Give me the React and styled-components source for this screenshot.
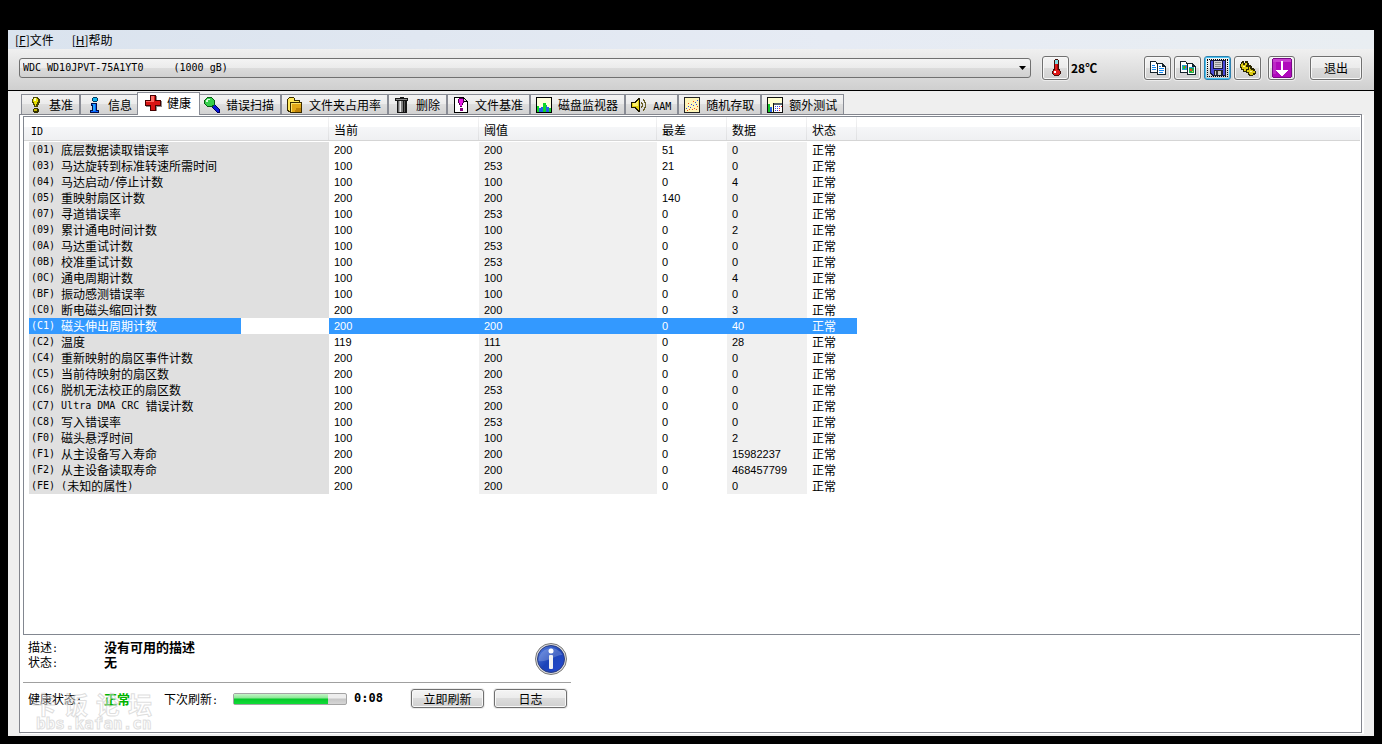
import { Fragment, useState } from "react";
import styled, { createGlobalStyle, css } from "styled-components";

const GlobalStyle = createGlobalStyle`
  * {
    box-sizing: border-box;
  }
  body {
    margin: 0;
    background: #000;
    color: #000;
    font: 12px/16px "Noto Sans CJK SC", sans-serif;
  }
  button, select {
    font: inherit;
    color: inherit;
  }
`;

const smart = [
  ["(01) 底层数据读取错误率", 200, 200, 51, 0],
  ["(03) 马达旋转到标准转速所需时间", 100, 253, 21, 0],
  ["(04) 马达启动/停止计数", 100, 100, 0, 4],
  ["(05) 重映射扇区计数", 200, 200, 140, 0],
  ["(07) 寻道错误率", 100, 253, 0, 0],
  ["(09) 累计通电时间计数", 100, 100, 0, 2],
  ["(0A) 马达重试计数", 100, 253, 0, 0],
  ["(0B) 校准重试计数", 100, 253, 0, 0],
  ["(0C) 通电周期计数", 100, 100, 0, 4],
  ["(BF) 振动感测错误率", 100, 100, 0, 0],
  ["(C0) 断电磁头缩回计数", 200, 200, 0, 3],
  ["(C1) 磁头伸出周期计数", 200, 200, 0, 40],
  ["(C2) 温度", 119, 111, 0, 28],
  ["(C4) 重新映射的扇区事件计数", 200, 200, 0, 0],
  ["(C5) 当前待映射的扇区数", 200, 200, 0, 0],
  ["(C6) 脱机无法校正的扇区数", 100, 253, 0, 0],
  ["(C7) Ultra DMA CRC 错误计数", 200, 200, 0, 0],
  ["(C8) 写入错误率", 100, 253, 0, 0],
  ["(F0) 磁头悬浮时间", 100, 100, 0, 2],
  ["(F1) 从主设备写入寿命", 200, 200, 0, 15982237],
  ["(F2) 从主设备读取寿命", 200, 200, 0, 468457799],
  ["(FE) (未知的属性)", 200, 200, 0, 0],
];

const columns = [
  { label: "ID", width: 300 },
  { label: "当前", width: 150 },
  { label: "阈值", width: 178 },
  { label: "最差", width: 70 },
  { label: "数据", width: 80 },
  { label: "状态", width: 50 },
];

// latin runs go in the narrow 6px font, chinese stays at 12px
const mixed = (text) =>
  text
    .split(/([\x20-\x7e]+)/)
    .map((part, i) =>
      i % 2 ? <Mono key={i}>{part}</Mono> : <Fragment key={i}>{part}</Fragment>
    );

const Icon = ({ size = 16, children }) => (
  <svg
    width={size}
    height={size}
    viewBox={`0 0 ${size} ${size}`}
    shapeRendering="crispEdges"
    aria-hidden="true"
  >
    {children}
  </svg>
);

const BulbIcon = () => (
  <Icon>
    <path d="M6 0h5v1h1v1h1v4h-1v2h-1v2H7V8H6V6H5V2h1z" fill="#4a4600" />
    <path d="M7 1h3v1h1v3h-1v2H9v2H8V7H7V5H6V2h1z" fill="#e8e000" />
    <path d="M7 1h2v3H7z" fill="#ffffb4" />
    <path d="M7 11h4v1h1v3h-1v1H7v-1H6v-3h1z" fill="#333000" />
    <path d="M7 12h3v2H7z" fill="#c4b800" />
  </Icon>
);

const InfoIcon = () => (
  <Icon>
    <path d="M7 0h4v1h1v3h-1v1H7V4H6V1h1z" fill="#003a60" />
    <path d="M7 1h4v3H7z" fill="#12b4f0" />
    <path d="M5 6h6v7h2v3H4v-3h2V9H5z" fill="#00104a" />
    <path d="M6 7h4v7h2v1H5v-1h2V8H6z" fill="#0862ff" />
    <path d="M7 7h2v7H7z" fill="#22a4ff" />
  </Icon>
);

const CrossIcon = () => (
  <Icon>
    <path d="M6 1h6v5h5v6h-5v4H6v-4H1V6h5z" fill="#8a8a8a" />
    <path d="M5 0h6v5h5v6h-5v5H5v-5H0V5h5z" fill="#480000" />
    <path d="M6 1h4v5h5v4h-5v5H6v-5H1V6h5z" fill="#d81414" />
    <path d="M6 1h3v5H6zM1 6h8v1H1z" fill="#ff6a62" />
  </Icon>
);

const MagnifierIcon = () => (
  <Icon>
    <path d="m8 9 2-2 6 6v3h-3l-5-5z" fill="#000058" />
    <path d="m9 9 1-1 5 5v2h-2L9 10z" fill="#0818d8" />
    <path d="M3 0h5v1h1v1h1v1h1v5h-1v1H9v1H3V9H2V8H1V7H0V3h1V2h1V1h1z" fill="#065c12" />
    <path d="M3 1h5v1h1v1h1v5H8v1H3V8H2V7H1V3h1V2h1z" fill="#35cf4b" />
    <path d="M3 2h3v1H4v2H2V3h1z" fill="#d4ffd9" />
  </Icon>
);

const FolderIcon = () => (
  <Icon>
    <path d="M1 1h1V0h5v1h1v2h5v2h2v11H3v-1H1v-1H0V2h1z" fill="#3a2c00" />
    <path d="M2 1h5v3h5v1H3v9H2v-1H1V2h1z" fill="#ffe85c" />
    <path d="M4 6h10v9H4z" fill="#e2a818" />
    <path d="M4 6h10v1H5v8H4z" fill="#ffe46a" />
    <path d="M9 11h5v4H8v-2h1z" fill="#c08408" />
  </Icon>
);

const TrashIcon = () => (
  <Icon>
    <path d="M6 0h4v1h4v3h-1v12H3V4H1V1h5z" fill="#161616" />
    <path d="M2 2h11v1H2z" fill="#8c8c8c" />
    <path d="M4 4h1v11H4z" fill="#6c6c6c" />
    <path d="M5 4h1v11H5z" fill="#b4b4b4" />
    <path d="M6 4h1v11H6z" fill="#e8e8e8" />
    <path d="M7 4h2v11H7z" fill="#808080" />
    <path d="M10 4h1v11h-1z" fill="#5c5c5c" />
  </Icon>
);

const DocIcon = () => (
  <Icon>
    <path d="M1 0h10v1h1v1h1v1h1v1h1v12H1z" fill="#000" />
    <path d="M2 1h8v4h4v10H2z" fill="#fff" />
    <path d="M11 2h1v1h1v1h-2z" fill="#ddd" />
    <path d="M6 1h4v1h1v4h-1v2H9v2H7V8H6V6H5V2h1z" fill="#4c004c" />
    <path d="M6 2h4v4H9v3H7V6H6z" fill="#e61ae6" />
    <path d="M7 11h3v3H7z" fill="#84007c" />
  </Icon>
);

const ChartIcon = () => (
  <Icon>
    <path d="M0 0h16v16H0z" fill="#000" />
    <path d="M1 1h14v14H1z" fill="#ffffdc" />
    <path d="M1 9h2v2h2v4H1zM7 6h3v2h1v7H7zM13 11h2v4h-2z" fill="#10d828" />
    <path d="M3 11h2v-1h2v5H3zM10 9h1v1h2v5h-3z" fill="#2660e8" />
  </Icon>
);

const SpeakerIcon = () => (
  <Icon>
    <path d="M7 1h2v14H7v-1H6v-1H5v-1H4v-1H0V5h4V4h1V3h1V2h1z" fill="#1c1800" />
    <path d="M1 6h4V5h1V4h1V3h1v10H7v-1H6v-1H5v-1H1z" fill="#e2cf10" />
    <path d="M2 6h3V5h1V4h1v5H2z" fill="#fff36a" />
    <path d="M10 5h1v1h1v4h-1v1h-1V9h1V7h-1zM12 2h1v1h1v2h1v6h-1v2h-1v1h-1v-2h1v-2h1V6h-1V4h-1z" fill="#665c24" />
  </Icon>
);

const ScatterIcon = () => (
  <Icon>
    <path d="M0 0h16v16H0z" fill="#222" />
    <path d="M1 1h14v14H1z" fill="#fff6b8" />
    <path d="M2 11h1v1H2zM4 9h1v1H4zM6 10h1v1H6zM7 7h1v1H7zM9 8h1v1H9zM11 5h1v1h-1zM13 3h1v1h-1zM12 7h1v1h-1z" fill="#3448e8" />
    <path d="M3 13h1v1H3zM5 12h1v1H5zM8 12h1v1H8zM10 11h1v1h-1zM12 12h1v1h-1zM4 6h1v1H4zM9 4h1v1H9zM13 9h1v1h-1z" fill="#f04a20" />
  </Icon>
);

const ExtraIcon = () => (
  <Icon>
    <path d="M0 0h16v16H0z" fill="#111" />
    <path d="M1 1h14v5H1z" fill="#ffffd0" />
    <path d="M1 6h5v9H1z" fill="#ffffd0" />
    <path d="M1 7h2v8H1z" fill="#14c828" />
    <path d="M3 10h2v5H3z" fill="#2660e8" />
    <path d="M7 6h8v9H7z" fill="#fff" />
    <path d="M7 6h8v2H7z" fill="#55616b" />
    <path d="M8 9h1v1H8zM10 9h1v1h-1zM12 9h1v1h-1zM8 11h1v1H8zM10 11h1v1h-1zM8 13h1v1H8zM10 13h1v1h-1z" fill="#3448e8" />
    <path d="M12 11h1v1h-1zM12 13h1v1h-1zM14 9h1v1h-1z" fill="#e83030" />
  </Icon>
);

const ThermometerIcon = () => (
  <Icon size={18}>
    <path d="M7 1h1V0h3v1h1v9h1v2h1v3h-1v1h-1v1H7v-1H6v-1H5v-3h1v-2h1z" fill="#42110c" />
    <path d="M8 1h3v5H8z" fill="#7fdce4" />
    <path d="M8 5h3v6h1v1h1v3h-1v1H7v-1H6v-3h1v-1h1z" fill="#e01818" />
    <path d="M7 12h2v2H7z" fill="#fff" />
    <path d="M10 5h1v6h-1z" fill="#a00c0c" />
  </Icon>
);

const CopyIcon = () => (
  <Icon>
    <path d="M0 1h6v1h1v1h1v10H0z" fill="#16242c" />
    <path d="M1 2h5v2h1v8H1z" fill="#fff" />
    <path d="M7 3h6v1h1v1h1v1h1v9H7z" fill="#16242c" />
    <path d="M8 4h4v3h3v7H8z" fill="#fff" />
    <path d="M2 5h3v1H2zM2 7h4v1H2zM2 9h4v1H2zM9 6h2v1H9zM9 8h5v1H9zM9 10h5v1H9zM9 12h4v1H9z" fill="#1688f0" />
  </Icon>
);

const CopyImageIcon = () => (
  <Icon>
    <path d="M0 1h6v1h1v1h1v10H0z" fill="#16242c" />
    <path d="M1 2h5v2h1v8H1z" fill="#fff" />
    <path d="M2 5h5v5H2z" fill="#2a9bd4" />
    <path d="M3 6h2v3H3z" fill="#24c434" />
    <path d="M7 3h6v1h1v1h1v1h1v9H7z" fill="#16242c" />
    <path d="M8 4h4v3h3v7H8z" fill="#fff" />
    <path d="M9 7h5v6H9z" fill="#1aa84c" />
    <path d="M9 7h5v1H9z" fill="#2a9bd4" />
    <path d="M10 9h2v2h-2zM5 6h1v2H5z" fill="#f04018" />
    <path d="M12 11h1v1h-1z" fill="#ffe020" />
  </Icon>
);

const SaveIcon = () => (
  <Icon>
    <path d="M0 0h16v16H2v-1H1v-1H0z" fill="#181838" />
    <path d="M1 1h2v8h10V1h2v14H3v-1H2v-1H1z" fill="#4848d8" />
    <path d="M4 1h8v7H4z" fill="#d4d4d4" />
    <path d="M5 2h6v1H5zM5 4h6v1H5zM5 6h6v1H5z" fill="#8a8a8a" />
    <path d="M4 10h9v5H4z" fill="#222" />
    <path d="M5 11h6v4H5z" fill="#c8c8c8" />
    <path d="M6 11h2v4H6z" fill="#333" />
  </Icon>
);

const OptionsIcon = () => (
  <Icon>
    <path d="M2 1h2v2h1V1h3v2h1v2h2v1h1v2h2v1h1v2h1v3h-1v1h-2v1H9v-1H8v-2H6v-1H3V10H1V8H0V4h1V2h1z" fill="#2c2800" />
    <path d="M2 3h1v2h2V3h2v2H6v2h2v2H6v2H4V9H2V7H1V4h1z" fill="#dcca10" />
    <path d="M9 7h1v2h1v1h2v1h2v2h-2v2h-3v-1H9v-2H7v-2h2z" fill="#dcca10" />
    <path d="M3 6h2v1H3zM10 11h2v1h-2z" fill="#fff8a0" />
  </Icon>
);

const DownIcon = () => (
  <Icon size={20}>
    <path d="M1 0h18v1h1v18h-1v1H1v-1H0V1h1z" fill="#7a0788" />
    <path d="M1 1h18v18H1z" fill="#b00abc" />
    <path d="M1 1h18v3H1z" fill="#c840d0" />
    <path d="M1 4h3v12H1z" fill="#bc28c6" />
    <path d="M9 3h2v9h5v1h-1v1h-1v1h-1v1h-1v1h-1v1H9v-1H8v-1H7v-1H6v-1H5v-1H4v-1h5z" fill="#fff" />
  </Icon>
);

const BigInfoIcon = () => (
  <svg width="32" height="32" viewBox="0 0 32 32" aria-hidden="true">
    <defs>
      <linearGradient id="ball" x1="0" y1="0" x2="1" y2="1">
        <stop offset="0" stopColor="#5a84e4" />
        <stop offset="0.5" stopColor="#1c44b8" />
        <stop offset="1" stopColor="#2448d0" />
      </linearGradient>
    </defs>
    <circle cx="16" cy="16" r="15.5" fill="#dcdcdc" stroke="#777" />
    <circle cx="16" cy="16" r="13.5" fill="url(#ball)" stroke="#2a3c80" />
    <path d="M3.5 18a12.7 12.7 0 0 1 24-6C22 11 12 20 3.500 18z" fill="#fff" opacity="0.2" />
    <circle cx="16" cy="8" r="2.500" fill="#fff" />
    <rect x="14" y="12" width="4" height="14" rx="1" fill="#f2f2f2" />
  </svg>
);

const tabs = [
  ["基准", BulbIcon],
  ["信息", InfoIcon],
  ["健康", CrossIcon],
  ["错误扫描", MagnifierIcon],
  ["文件夹占用率", FolderIcon],
  ["删除", TrashIcon],
  ["文件基准", DocIcon],
  ["磁盘监视器", ChartIcon],
  ["AAM", SpeakerIcon],
  ["随机存取", ScatterIcon],
  ["额外测试", ExtraIcon],
];

const App = () => {
  const [tab, setTab] = useState("健康");
  const [selected, setSelected] = useState(11);
  const progress = 84;

  return (
    <Screen>
      <GlobalStyle />
      <Window>
        <MenuBar>
          <MenuItem>
            [<u>F</u>]文件
          </MenuItem>
          <MenuItem>
            [<u>H</u>]帮助
          </MenuItem>
        </MenuBar>
        <Toolbar>
          <DriveBox>
            <DriveSelect aria-label="驱动器">
              <option>
                {"WDC WD10JPVT-75A1YT0     (1000 gB)".replace(/ /g, "\u00a0")}
              </option>
            </DriveSelect>
            <Arrow width="9" height="5" viewBox="0 0 9 5" aria-hidden="true">
              <path d="M1 0h7L4.500 4z" />
            </Arrow>
          </DriveBox>
          <ToolButton aria-label="温度">
            <ThermometerIcon />
          </ToolButton>
          <Temperature>28℃</Temperature>
          <ToolGroup>
            <ToolButton aria-label="复制文本">
              <CopyIcon />
            </ToolButton>
            <ToolButton aria-label="复制图像">
              <CopyImageIcon />
            </ToolButton>
            <ToolButton aria-label="保存" $focused>
              <SaveIcon />
            </ToolButton>
            <ToolButton aria-label="选项">
              <OptionsIcon />
            </ToolButton>
          </ToolGroup>
          <DownloadButton aria-label="最小化">
            <DownIcon />
          </DownloadButton>
          <ExitButton>退出</ExitButton>
        </Toolbar>

        <TabStrip role="tablist">
          {tabs.map(([label, TabIcon]) => (
            <Tab
              key={label}
              role="tab"
              aria-selected={tab === label}
              $active={tab === label}
              onClick={() => setTab(label)}
            >
              <TabIcon />
              <span>{mixed(label)}</span>
            </Tab>
          ))}
        </TabStrip>

        <Panel>
          <List>
            <Table>
              <colgroup>
                {columns.map(({ label, width }) => (
                  <Col key={label} $width={width} />
                ))}
              </colgroup>
              <thead>
                <tr>
                  {columns.map(({ label }) => (
                    <HeadCell key={label}>{mixed(label)}</HeadCell>
                  ))}
                </tr>
              </thead>
              <tbody>
                {smart.map(([name, ...values], i) => (
                  <Row
                    key={name}
                    $selected={i === selected}
                    onClick={() => setSelected(i)}
                  >
                    <Cell>{mixed(name)}</Cell>
                    {values.map((value, n) => (
                      <NumberCell key={n}>{value}</NumberCell>
                    ))}
                    <Cell>正常</Cell>
                  </Row>
                ))}
              </tbody>
            </Table>
          </List>

          <Details>
            <Description>
              <dt>描述{mixed(":")}</dt>
              <dd>没有可用的描述</dd>
              <dt>状态{mixed(":")}</dt>
              <dd>无</dd>
            </Description>
            <BigInfoIcon />
          </Details>

          <StatusRow>
            <span>健康状态{mixed(":")}</span>
            <Health>正常</Health>
            <span>下次刷新{mixed(":")}</span>
            <Progress
              role="progressbar"
              aria-label="下次刷新"
              aria-valuenow={progress}
            >
              <ProgressBar style={{ width: `${progress}%` }} />
            </Progress>
            <Countdown>0:08</Countdown>
            <SmallButton>立即刷新</SmallButton>
            <SmallButton>日志</SmallButton>
          </StatusRow>

          <Watermark>
            <WatermarkName>
              <span>卡</span>
              <span>饭</span>
              <span>论</span>
              <span>坛</span>
            </WatermarkName>
            <WatermarkUrl>bbs.kafan.cn</WatermarkUrl>
          </Watermark>
        </Panel>
      </Window>
    </Screen>
  );
};

const face = css`
  background: linear-gradient(#f4f4f4, #ebebeb 50%, #dcdcdc 50%, #d0d0d0);
`;

const Mono = styled.span`
  font-family: "DejaVu Sans Mono", monospace;
  font-size: 10px;
  line-height: 1;
  white-space: pre;
`;

const Screen = styled.div`
  display: flex;
  min-height: 100vh;
  padding: 30px 8px 8px;
`;

const Window = styled.main`
  flex: 1;
  min-width: 0;
  display: flex;
  flex-direction: column;
  background: #efefef;
`;

const MenuBar = styled.nav`
  display: flex;
  gap: 18px;
  height: 19px;
  padding-left: 7px;
  background: linear-gradient(90deg, #dae3ee, #e6ebf4 60%, #e9eef2);
`;

const MenuItem = styled.button`
  padding: 0;
  border: 0;
  background: none;
  line-height: 19px;
`;

const Toolbar = styled.header`
  display: flex;
  align-items: center;
  padding: 7px 12px 10px 11px;
  border-bottom: 1px solid #000;
  background: linear-gradient(#f0f0f0, #cfcfcf);
`;

const DriveBox = styled.div`
  flex: 1;
  display: grid;
  align-items: center;
  margin-right: 11px;
`;

const DriveSelect = styled.select`
  grid-area: 1 / 1;
  appearance: none;
  height: 20px;
  padding: 0 3px;
  border: 1px solid #707070;
  border-radius: 3px;
  font-family: "DejaVu Sans Mono", monospace;
  font-size: 10px;
  ${face}
`;

const Arrow = styled.svg`
  grid-area: 1 / 1;
  justify-self: end;
  margin-right: 4px;
  pointer-events: none;
`;

const ToolButton = styled.button`
  display: flex;
  align-items: center;
  justify-content: center;
  width: 27px;
  height: 24px;
  padding: 0;
  border: 1px solid #707070;
  border-radius: 3px;
  box-shadow: 0 0 0 1px #ececec, inset 0 0 0 1px #f8f8f8;
  ${face}
  ${({ $focused }) =>
    $focused &&
    css`
      border-color: #2c7fae;
      box-shadow: inset 0 0 0 1px #48c4f4;
      outline: 1px dotted #000;
      outline-offset: -4px;
    `}
`;

const DownloadButton = styled(ToolButton)`
  margin: 0 15px 0 7px;
`;

const ExitButton = styled(ToolButton)`
  width: 52px;
`;

const Temperature = styled.strong`
  width: 75px;
  padding-left: 2px;
`;

const ToolGroup = styled.div`
  display: flex;
  gap: 3px;
`;

const TabStrip = styled.div`
  display: flex;
  align-items: flex-end;
  height: 23px;
  padding-left: 13px;
`;

const Tab = styled.button`
  display: flex;
  align-items: center;
  gap: 6px;
  height: 20px;
  padding: 0 6px 0 5px;
  border: 1px solid #898c95;
  border-bottom: 0;
  line-height: 19px;
  white-space: nowrap;
  background: linear-gradient(#f3f3f3, #ebebeb 50%, #dedede 50%, #d2d2d2);
  svg {
    overflow: visible;
  }
  ${({ $active }) =>
    $active &&
    css`
      z-index: 1;
      height: 23px;
      margin: 0 -2px -1px;
      padding: 0 8px 3px 7px;
      background: #fff;
    `}
`;

const Panel = styled.section`
  position: relative;
  flex: 1;
  display: flex;
  flex-direction: column;
  margin: 0 12px 3px 11px;
  padding: 1px 1px 0 3px;
  border: 1px solid #83858d;
  box-shadow: 2px 1px #fff;
  background: #fff;
`;

const List = styled.div`
  flex: 1;
  padding-left: 5px;
  border: 1px solid #828790;
  border-right: 0;
  background: linear-gradient(#fff 10px, #f5f6f8 10px, #eff0f2 23px, #d5d5d5 23px)
    no-repeat 0 0 / 100% 24px;
`;

const Table = styled.table`
  width: 828px;
  table-layout: fixed;
  border-collapse: collapse;
`;

const Col = styled.col`
  width: ${({ $width }) => $width}px;
`;

const HeadCell = styled.th`
  height: 25px;
  padding: 0 5px;
  font-weight: normal;
  text-align: left;
  background: linear-gradient(#f4f4f5, #dedfe1) no-repeat right top / 1px 23px;
  &:first-child {
    padding-left: 2px;
  }
`;

const Cell = styled.td`
  height: 16px;
  padding: 0 0 0 5px;
  line-height: 16px;
  white-space: nowrap;
  &:nth-child(odd) {
    background: #f0f0f0;
  }
  &:first-child {
    padding-left: 2px;
    background: #e0e0e0;
  }
  ${Mono} {
    display: inline-block;
    line-height: 16px;
    vertical-align: top;
  }
`;

const NumberCell = styled(Cell)`
  font-family: "Liberation Sans", Arial, sans-serif;
  font-size: 11px;
`;

const Row = styled.tr`
  ${({ $selected }) =>
    $selected &&
    css`
      color: #fff;
      ${Cell}, ${Cell}:nth-child(odd) {
        background: #3399ff;
      }
      ${Cell}:first-child {
        background: linear-gradient(90deg, #3399ff 212px, #fff 212px);
      }
    `}
`;

const Details = styled.div`
  display: flex;
  justify-content: space-between;
  align-self: flex-start;
  width: 548px;
  height: 48px;
  padding: 8px 4px 0 5px;
  border-bottom: 1px solid #a0a0a0;
`;

const Description = styled.dl`
  display: grid;
  grid-template-columns: 76px auto;
  grid-auto-rows: 15px;
  align-self: flex-start;
  margin: -4px 0 0;
  line-height: 15px;
  dd {
    margin: 0;
    font-size: 13px;
    font-weight: bold;
  }
`;

const StatusRow = styled.div`
  display: grid;
  grid-template-columns: 76px 60px 69px 114px 64px 73px 73px;
  grid-auto-rows: 19px;
  align-items: center;
  padding: 6px 0 24px 5px;
  line-height: 19px;
  button + button {
    margin-left: 10px;
  }
`;

const Health = styled.strong`
  font-size: 13px;
  color: #00b400;
`;

const Progress = styled.div`
  height: 12px;
  border: 1px solid #a4a4a4;
  border-radius: 2px;
  background: linear-gradient(#eee 40%, #c6c6c6 50%, #d6d6d6);
`;

const ProgressBar = styled.div`
  height: 100%;
  background: linear-gradient(#c4f4c8, #8be894 40%, #06c82a 50%, #10dc38);
`;

const Countdown = styled.strong`
  padding-left: 7px;
  font-family: "DejaVu Sans Mono", monospace;
`;

const SmallButton = styled(ToolButton)`
  width: 73px;
  height: 19px;
`;

/* sits over the status row, bottom left */
const Watermark = styled.div`
  position: absolute;
  left: 12px;
  bottom: 0;
  color: rgba(255, 255, 255, 0.4);
  font-weight: bold;
  -webkit-text-stroke: 1px rgba(190, 190, 190, 0.5);
  pointer-events: none;
`;

const WatermarkName = styled.div`
  display: flex;
  gap: 8px;
  font-size: 24px;
  line-height: 24px;
`;

const WatermarkUrl = styled.div`
  padding-left: 4px;
  font-family: "DejaVu Sans Mono", monospace;
  font-size: 16px;
  line-height: 16px;
`;

export default App;
